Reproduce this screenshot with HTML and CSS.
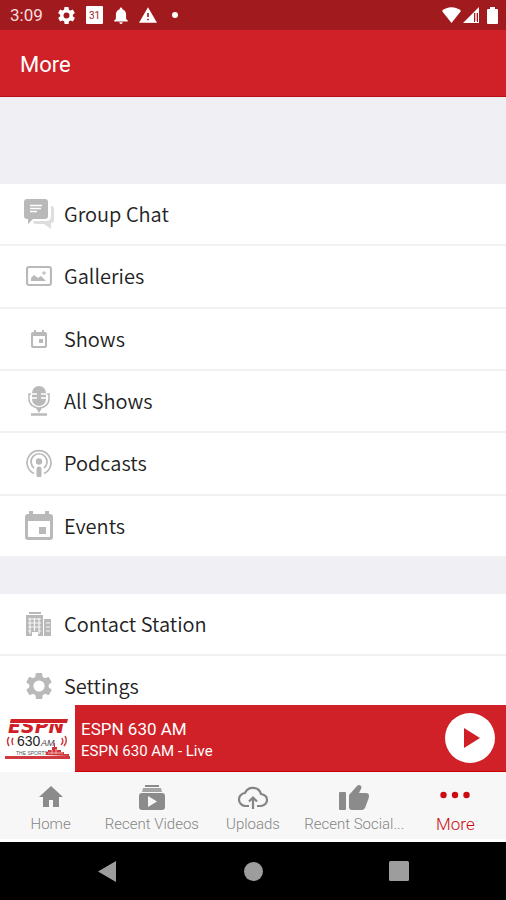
FILE: index.html
```html
<!DOCTYPE html>
<html lang="en">
<head>
<meta charset="utf-8">
<meta name="viewport" content="width=device-width, initial-scale=1">
<title>More</title>
<link rel="stylesheet" href="styles.css">
</head>
<body>
<div class="status">
  <span class="clock">3:09</span>
  <div class="notices">
    <svg width="17" height="17" viewBox="2 2 20 20" fill="currentColor"><path d="M19.400 13c0-.3.100-.6.100-1s0-.7-.1-1l2.100-1.600c.2-.2.200-.4.100-.6l-2-3.500c-.1-.2-.4-.3-.6-.2l-2.500 1c-.5-.4-1.100-.7-1.700-1l-.4-2.600c0-.3-.2-.5-.4-.5h-4c-.2 0-.4.200-.5.400l-.4 2.700c-.6.200-1.100.6-1.700 1l-2.500-1c-.2-.1-.5 0-.6.200l-2 3.500c-.1.200-.1.400.1.600L4.600 11c0 .3-.1.700-.1 1s0 .7.100 1l-2.100 1.600c-.2.200-.2.400-.1.600l2 3.500c.1.200.4.300.6.200l2.500-1c.5.400 1.100.7 1.700 1l.4 2.600c0 .3.200.5.500.5h4c.2 0 .4-.2.400-.4l.4-2.700c.6-.2 1.200-.6 1.700-1l2.500 1c.2.100.5 0 .6-.2l2-3.500c.1-.2.100-.4-.1-.6zM12 15.500a3.500 3.500 0 1 1 0-7 3.500 3.500 0 0 1 0 7z"/></svg>
    <span class="date">31</span>
    <svg width="14" height="17" viewBox="4 2 16 20" fill="currentColor"><path d="M12 22a2 2 0 0 0 2-2h-4a2 2 0 0 0 2 2zm6-6v-5c0-3-1.600-5.600-4.500-6.300V4a1.500 1.500 0 0 0-3 0v.7C7.600 5.400 6 7.900 6 11v5l-2 2v1h16v-1z"/></svg>
    <svg width="18" height="16" viewBox="1 2 22 19" fill="currentColor"><path d="M1 21h22L12 2zm12-3h-2v-2h2zm0-4h-2v-5h2z"/></svg>
    <span class="dot"></span>
  </div>
  <div class="signals">
    <svg width="19" height="16" viewBox="0 0 19 16" fill="currentColor"><path d="M0 4C5-1 14-1 19 4L9.500 16z"/></svg>
    <svg width="16" height="16" viewBox="0 0 16 16"><path d="M16 0v16H0z" fill="currentColor"/><path d="M11 6h1v9h-1zM14 6h1v9h-1z" fill="#a11b1e"/><path d="M12 6h2v8h-2z" fill="#e8bcbc"/></svg>
    <svg width="11" height="17" viewBox="0 0 11 17" fill="currentColor"><path d="M3 0h5v2h2q1 0 1 1v13q0 1-1 1H1q-1 0-1-1V3q0-1 1-1h2z"/></svg>
  </div>
</div>
<header class="header"><h1>More</h1></header>
<main class="content">
  <nav class="menu main-menu" aria-label="Sections">
    <a href="#chat"><svg width="30" height="30" viewBox="0 0 30 30"><path d="M27 7q3 0 3 3v11q0 3-3 3v6l-7-5H12q-3 0-3-3h13q5 0 5-5z" fill="#dedede"/><path d="M3 0h18q3 0 3 3v14q0 3-3 3H9l-5 5v-5H3q-3 0-3-3V3q0-3 3-3z" fill="#b9b9b9"/><path d="M6 6.500h12M6 9.500h11M6 12.500h7" stroke="#fff" stroke-width="1.500"/></svg><span>Group Chat</span></a>
    <a href="#galleries"><svg width="26" height="22" viewBox="0 0 26 22"><rect x="1" y="2" width="24" height="18" rx="2" fill="none" stroke="#b9b9b9" stroke-width="2.200"/><path d="M5 16v-3l3-3 4 3 3-2 5 5z" fill="#b9b9b9"/><circle cx="18" cy="8" r="1.800" fill="#c5c5c5"/></svg><span>Galleries</span></a>
    <a href="#shows"><svg width="16" height="18" viewBox="0 0 16 18"><path d="M3 0h2v2h6V0h2v2h1q2 0 2 2v12q0 2-2 2H2q-2 0-2-2V4q0-2 2-2h1zM2 6v9q0 1 1 1h10q1 0 1-1V6z" fill="#b9b9b9" fill-rule="evenodd"/><path d="M8 9h4v4H8z" fill="#b9b9b9"/></svg><span>Shows</span></a>
    <a href="#all"><svg width="22" height="30" viewBox="0 0 22 30" fill="none" stroke="#b9b9b9"><path d="M4 7a7 7 0 0 1 14 0v6a7 7 0 0 1-14 0z" fill="#b9b9b9" stroke="none"/><path d="M4 8h5M13 8h5M4 12h5M13 12h5" stroke="#fff" stroke-width="1.500"/><path d="M3 8H1v5a10 9 0 0 0 20 0V8h-2" stroke-width="1.500"/><path d="M8 22h6l-3 5z" fill="#b9b9b9" stroke="none"/><path d="M3 28.500h16" stroke-width="2.500"/></svg><span>All Shows</span></a>
    <a href="#podcasts"><svg width="26" height="28" viewBox="0 0 26 28" fill="none" stroke="#b9b9b9" stroke-width="1.700"><path d="M8 24.500a12 12 0 1 1 10 0M8 19a8 8 0 1 1 10 0"/><circle cx="13" cy="12.500" r="3.200" fill="#b9b9b9" stroke="none"/><path d="M13 20v6" stroke-width="5" stroke-linecap="round"/></svg><span>Podcasts</span></a>
    <a href="#events"><svg width="28" height="30" viewBox="0 0 28 30"><path d="M4 0h4v3h12V0h4v3h1q3 0 3 3v20q0 3-3 3H3q-3 0-3-3V6q0-3 3-3h1zM3 10v15q0 1 1 1h20q1 0 1-1V10z" fill="#b9b9b9" fill-rule="evenodd"/><path d="M14 16h7v7h-7z" fill="#b9b9b9"/></svg><span>Events</span></a>
  </nav>
  <nav class="menu" aria-label="Station">
    <a href="#contact"><svg width="26" height="24" viewBox="0 0 26 24"><path d="M3 0h12v2H3zM0 3h17v21h-5v-4H6v4H0zM18 7h7v17h-7z" fill="#b9b9b9"/><path d="M2 7h13M2 11h13M2 15h13M2 19h3M13 19h2M20 11h4M20 15h4M20 19h4M4 6v16M8.500 6v13M13 6v16" stroke="#f7f7f7" stroke-width="1.200"/></svg><span>Contact Station</span></a>
    <a href="#settings"><svg width="26" height="26" viewBox="2 2 20 20" fill="#b9b9b9"><path d="M19.400 13c0-.3.100-.6.100-1s0-.7-.1-1l2.100-1.600c.2-.2.200-.4.100-.6l-2-3.500c-.1-.2-.4-.3-.6-.2l-2.500 1c-.5-.4-1.100-.7-1.700-1l-.4-2.600c0-.3-.2-.5-.4-.5h-4c-.2 0-.4.200-.5.400l-.4 2.700c-.6.200-1.100.6-1.700 1l-2.500-1c-.2-.1-.5 0-.6.200l-2 3.500c-.1.200-.1.400.1.600L4.600 11c0 .3-.1.700-.1 1s0 .7.100 1l-2.100 1.600c-.2.200-.2.400-.1.600l2 3.500c.1.200.4.300.6.200l2.500-1c.5.400 1.100.7 1.700 1l.4 2.600c0 .3.200.5.500.5h4c.2 0 .4-.2.400-.4l.4-2.700c.6-.2 1.200-.6 1.700-1l2.500 1c.2.100.5 0 .6-.2l2-3.500c.1-.2.100-.4-.1-.6zM12 16.300a4.300 4.300 0 1 1 0-8.600 4.300 4.300 0 0 1 0 8.600z"/></svg><span>Settings</span></a>
  </nav>
</main>
<section class="player" aria-label="Player">
  <svg class="logo" width="75" height="67" viewBox="0 0 75 67" role="img" aria-label="ESPN 630 AM">
    <path d="M0 0h75v67H0z" fill="#fff"/>
    <text x="8" y="28" class="logo-name">ESPN</text>
    <path d="M11 14h57l-1 4H10z" fill="#cf2027"/>
    <path d="M8 18.500h60" stroke="#fff" stroke-width="1"/>
    <text x="17" y="41" class="logo-number">630</text>
    <text x="41" y="41" class="logo-band">AM</text>
    <path d="M9 32q-3 4 0 9M13 33q-2 3 0 7M62 33q2 4-1 7M65 31q3 5-1 10" fill="none" stroke="#cf3a40" stroke-width="1.500"/>
    <text x="16" y="50" class="logo-tag">THE SPORTS</text>
    <path d="M46 50v-3h2v-2h4v-3h2v-4h1v4h2v3h4v2h3v2h5v2z" fill="#d0353b"/><path d="M48 48h15M52 45v4M56 44v5" stroke="#efb0b0"/>
    <path d="M5 51h65v3H5z" fill="#cf3a40"/>
  </svg>
  <div class="track"><strong>ESPN 630 AM</strong><span>ESPN 630 AM - Live</span></div>
  <button class="play" aria-label="Play"><svg width="16" height="20" viewBox="0 0 16 20"><path d="M0 0l16 10L0 20z" fill="#cf2027"/></svg></button>
</section>
<nav class="tabs" aria-label="Tabs">
  <a href="#home"><svg width="24" height="28" viewBox="0 0 24 28" fill="#8b8b8b"><path d="M12 2l12 11h-4v10h-6v-7h-4v7H4V13H0z"/></svg><span>Home</span></a>
  <a href="#videos"><svg width="26" height="28" viewBox="0 0 26 28" fill="#8b8b8b"><path d="M6 1h14v2H6z"/><path d="M4 4h18l1 4H3z" fill="#a5a5a5"/><path d="M3 9h20q3 0 3 3v11q0 3-3 3H3q-3 0-3-3V12q0-3 3-3zm6 3v11l9-5.500z"/></svg><span>Recent Videos</span></a>
  <a href="#uploads"><svg width="30" height="28" viewBox="0 0 30 28" fill="none" stroke="#858585" stroke-width="2.200"><path d="M11 22H8a6.500 6.500 0 0 1-1-13 8.500 8.500 0 0 1 16 1q6 1 6 6t-6 6h-4M15 25V14M11 17.500l4-4 4 4"/></svg><span>Uploads</span></a>
  <a href="#social"><svg width="30" height="28" viewBox="0 0 30 28" fill="#8b8b8b"><path d="M1 8h5q1 0 1 1v16q0 1-1 1H1q-1 0-1-1V9q0-1 1-1zM10 11l8-9q2-2 4 0 1 1 0 3l-2 4h7q3 0 3 3 0 2-1 4l-3 8q-1 2-3 2H13q-3 0-3-3z"/></svg><span>Recent Social...</span></a>
  <a href="#more" class="active" aria-current="page"><svg width="30" height="28" viewBox="0 0 30 28" fill="currentColor"><circle cx="3.500" cy="11" r="3.200"/><circle cx="15" cy="11" r="3.200"/><circle cx="26.500" cy="11" r="3.200"/></svg><span>More</span></a>
</nav>
<div class="system">
  <button aria-label="Back"><svg width="18" height="21" viewBox="0 0 18 21"><path d="M18 0v21L0 10.500z" fill="#9d9d9d"/></svg></button>
  <button aria-label="Home screen"><svg width="19" height="19" viewBox="0 0 19 19"><circle cx="9.500" cy="9.500" r="9.500" fill="#9d9d9d"/></svg></button>
  <button aria-label="Overview"><svg width="20" height="20" viewBox="0 0 20 20"><rect width="20" height="20" rx="1.500" fill="#9d9d9d"/></svg></button>
</div>
</body>
</html>
```
FILE: styles.css
```css
* { box-sizing: border-box; }
body {
  margin: 0;
  height: 100vh;
  display: flex;
  flex-direction: column;
  font-family: Roboto, sans-serif;
  background: #efeff4;
}
svg { display: block; flex: none; }
a { color: inherit; text-decoration: none; }
button { border: 0; padding: 0; background: none; display: grid; place-items: center; }

.status {
  flex: none;
  height: 30px;
  padding: 0 8px 0 10px;
  display: flex;
  align-items: center;
  color: #fff;
  background: #a11b1e;
}
.clock { font-size: 17px; line-height: 30px; width: 48px; color: #f6dede; }
.notices { display: flex; align-items: center; gap: 11px; }
.date {
  width: 17px;
  height: 18px;
  border-radius: 1px;
  background: #fff;
  color: #a11b1e;
  font-size: 10px;
  line-height: 19px;
  text-align: center;
}
.dot { width: 6px; height: 6px; border-radius: 50%; background: #fff; margin-left: 4px; }
.signals { margin-left: auto; display: flex; gap: 2px; align-items: center; }
.signals svg:last-child { margin-left: 6px; }

.header {
  flex: none;
  height: 67px;
  padding: 3px 20px 0;
  display: flex;
  align-items: center;
  background: #cf2127;
  border-bottom: 1px solid #b80d12;
  color: #fff;
}
.header h1 { margin: 0; font-size: 22px; font-weight: 400; }

.content { flex: 1 1 0; min-height: 0; overflow: hidden; padding-top: 87px; }
.menu { display: grid; grid-auto-rows: 62px; background: #fff; margin-bottom: 36px; }
.main-menu { height: 374px; grid-auto-rows: 1fr; }
.menu a {
  display: grid;
  grid-template-columns: 50px 1fr;
  align-items: center;
  padding-left: 14px;
  border-bottom: 2px solid #f1f1f2;
  font-family: "Noto Sans CJK SC", sans-serif;
  font-weight: 350;
  font-size: 20px;
  line-height: 30px;
  color: #222;
}
.menu svg { justify-self: center; }

.player {
  flex: none;
  height: 67px;
  display: flex;
  align-items: center;
  background: #cf2127;
  padding-right: 11px;
  color: #fff;
  border-bottom: 1px solid #c00;
}
.logo-name { font: italic bold 19px "DejaVu Sans", sans-serif; fill: #cf2027; }
.logo-number { font: 14px "Liberation Sans", sans-serif; fill: #222; }
.logo-band { font: italic 9px "Liberation Sans", sans-serif; fill: #444; }
.logo-tag { font: 5px "Liberation Sans", sans-serif; fill: #555; }
.track { flex: 1; padding: 4px 0 0 6px; display: flex; flex-direction: column; }
.track strong { font-size: 17px; line-height: 22px; font-weight: 400; }
.track span { font-size: 15px; line-height: 22px; }
.play { width: 50px; height: 50px; border-radius: 50%; background: #fff; padding-left: 3px; }

.tabs {
  flex: none;
  height: 70px;
  padding-top: 12px;
  display: grid;
  grid-template-columns: repeat(5, 1fr);
  background: #f7f7f7;
  border-bottom: 3px solid #fff;
}
.tabs a {
  display: flex;
  flex-direction: column;
  align-items: center;
  font-size: 15px;
  font-weight: 300;
  line-height: 24px;
  color: #858585;
  white-space: nowrap;
}
.tabs .active { color: #c90d12; font-size: 17px; }

.system {
  flex: none;
  height: 58px;
  padding: 0 34px;
  display: grid;
  grid-template-columns: repeat(3, 1fr);
  background: #000;
}
```
